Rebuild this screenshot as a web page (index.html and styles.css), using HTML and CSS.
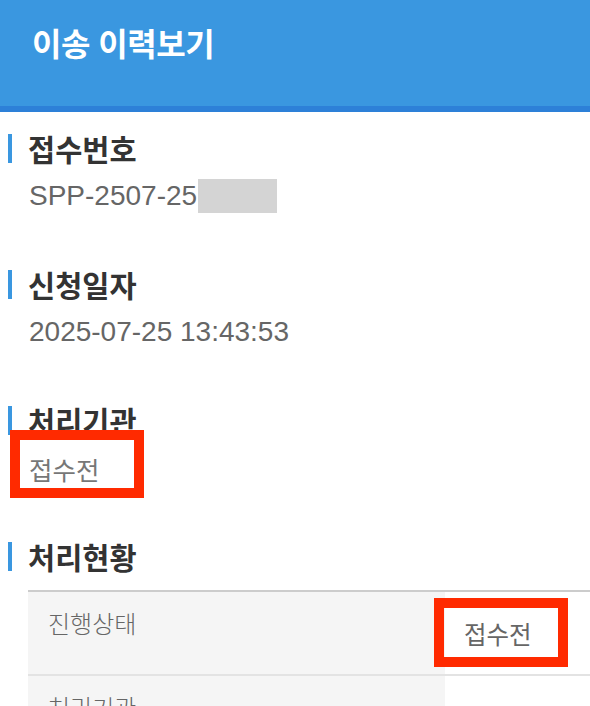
FILE: index.html
```html
<!DOCTYPE html>
<html lang="ko">
<head>
<meta charset="utf-8">
<title>이송 이력보기</title>
<link rel="stylesheet" href="styles.css">
</head>
<body>
<header class="top">
  <h1 class="title">이송 이력보기</h1>
</header>
<main class="content">
  <section class="sec">
    <h2 class="sec-title">접수번호</h2>
    <p class="sec-value">SPP-2507-25<span class="redact"></span></p>
  </section>
  <section class="sec">
    <h2 class="sec-title">신청일자</h2>
    <p class="sec-value">2025-07-25 13:43:53</p>
  </section>
  <section class="sec">
    <h2 class="sec-title">처리기관</h2>
    <p class="sec-value kor">접수전<span class="mark mark-a"></span></p>
  </section>
  <section class="sec last">
    <h2 class="sec-title">처리현황</h2>
    <table class="status">
      <tr>
        <th>진행상태</th>
        <td class="state">접수전<span class="mark mark-b"></span></td>
      </tr>
      <tr>
        <th>처리기관</th>
        <td></td>
      </tr>
    </table>
  </section>
</main>
</body>
</html>
```

FILE: styles.css
```css
html, body {
  margin: 0;
  padding: 0;
  background: #ffffff;
}
body {
  width: 590px;
  height: 706px;
  overflow: hidden;
  font-family: "Liberation Sans", "Noto Sans CJK KR", sans-serif;
}
.top {
  height: 106px;
  background: #3a97e0;
  border-bottom: 6px solid #2d80d8;
}
.title {
  margin: 0;
  padding-left: 32px;
  line-height: 84px;
  font-family: "Noto Sans CJK KR", sans-serif;
  font-size: 32px;
  font-weight: 700;
  color: #ffffff;
  letter-spacing: -0.5px;
}
.content {
  padding: 22px 0 0 8px;
}
.sec {
  margin-bottom: 56px;
}
.sec-title {
  margin: 0;
  border-left: 4px solid #3a97e0;
  padding-left: 16px;
  height: 29px;
  line-height: 29px;
  font-family: "Noto Sans CJK KR", sans-serif;
  font-size: 29.5px;
  font-weight: 700;
  color: #333333;
}
.sec-value {
  position: relative;
  display: flex;
  align-items: center;
  margin: 15px 0 0 0;
  padding-left: 21px;
  height: 36px;
  font-size: 28px;
  color: #666666;
}
.sec-value.kor {
  font-family: "Noto Sans CJK KR", sans-serif;
  font-size: 25.5px;
  color: #777777;
}
.redact {
  display: inline-block;
  width: 79px;
  height: 34px;
  margin-left: 1px;
  background: #d4d4d4;
}
.mark {
  position: absolute;
  box-sizing: border-box;
  border: 10px solid #ff2a00;
}
.mark-a {
  left: 2px;
  top: -20px;
  width: 134px;
  height: 68px;
}
.status {
  margin: 19px 0 0 20px;
  width: 562px;
  border-collapse: collapse;
  border-top: 2px solid #cccccc;
  font-family: "Noto Sans CJK KR", sans-serif;
}
.status th {
  width: 417px;
  box-sizing: border-box;
  padding: 15px 21px 0 20px;
  height: 84px;
  vertical-align: top;
  text-align: left;
  background: #f5f5f5;
  font-size: 24px;
  font-weight: 300;
  line-height: 32px;
  color: #666666;
  border-bottom: 2px solid #e3e3e3;
}
.status td {
  position: relative;
  padding: 0 0 0 19px;
  vertical-align: middle;
  font-size: 24.5px;
  color: #666666;
  border-bottom: 2px solid #e3e3e3;
}
.mark-b {
  left: -11px;
  top: 6px;
  width: 134px;
  height: 69px;
}
```
